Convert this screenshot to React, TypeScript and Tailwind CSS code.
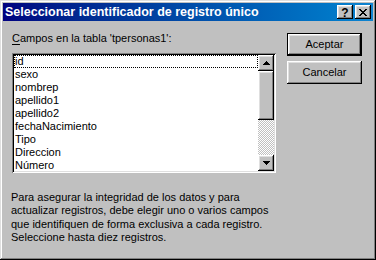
import React from 'react';

const raised =
  'shadow-[inset_-1px_-1px_#000000,inset_1px_1px_#ffffff,inset_-2px_-2px_#808080,inset_2px_2px_#dfdfdf]';

const fields = [
  'id',
  'sexo',
  'nombrep',
  'apellido1',
  'apellido2',
  'fechaNacimiento',
  'Tipo',
  'Direccion',
  'Número',
];

function Arrow({ up }: { up?: boolean }) {
  return (
    <svg width="7" height="4" viewBox="0 0 7 4" shapeRendering="crispEdges">
      {up ? (
        <path d="M3 0h1v1h1v1h1v1h1v1H0V3h1V2h1V1h1z" fill="#000" />
      ) : (
        <path d="M0 0h7v1H6v1H5v1H4v1H3V3H2V2H1V1H0z" fill="#000" />
      )}
    </svg>
  );
}

function TitleButton({ children }: { children: React.ReactNode }) {
  return (
    <div className={`w-[16px] h-[14px] bg-[#c0c0c0] flex items-center justify-center ${raised}`}>
      {children}
    </div>
  );
}

export default function App() {
  return (
    <div
      className="w-[376px] h-[260px] bg-[#c0c0c0] p-[3px] flex flex-col text-black text-[11px] shadow-[inset_-1px_-1px_#000000,inset_1px_1px_#dfdfdf,inset_-2px_-2px_#808080,inset_2px_2px_#ffffff]"
      style={{ fontFamily: '"Liberation Sans", Arial, sans-serif' }}
    >
      <div className="h-[18px] flex items-center bg-gradient-to-r from-[#000080] to-[#1084d0] pl-[2px] pr-[2px]">
        <span className="flex-1 text-white font-bold text-[12.5px] leading-[18px]">
          Seleccionar identificador de registro único
        </span>
        <div className="flex gap-[2px]">
          <TitleButton>
            <span className="font-bold text-[12px] leading-none mt-[1px]">?</span>
          </TitleButton>
          <TitleButton>
            <svg width="8" height="7" viewBox="0 0 8 7" shapeRendering="crispEdges">
              <path
                d="M0 0h2v1h1v1h2V1h1V0h2v1H7v1H6v1H5v1h1v1h1v1h1v1H6V6H5V5H3v1H2v1H0V6h1V5h1V4h1V3H2V2H1V1H0z"
                fill="#000"
              />
            </svg>
          </TitleButton>
        </div>
      </div>

      <div className="flex pl-[9px] pt-[10px]">
        <div className="w-[264px] flex flex-col">
          <div className="h-[14px] leading-[14px]">
            <span className="underline underline-offset-[2px]">C</span>ampos en la tabla 'tpersonas1':
          </div>
          <div className="mt-[8px] h-[120px] bg-white p-[2px] flex shadow-[inset_1px_1px_#808080,inset_-1px_-1px_#ffffff,inset_2px_2px_#000000,inset_-2px_-2px_#dfdfdf]">
            <div className="flex-1 overflow-hidden">
              {fields.map((f, i) => (
                <div
                  key={f}
                  className={`h-[13px] leading-[13px] pl-[1px] whitespace-nowrap ${
                    i === 0 ? 'outline outline-1 outline-dotted outline-black -outline-offset-1' : ''
                  }`}
                >
                  {f}
                </div>
              ))}
            </div>
            <div className="w-[16px] flex flex-col">
              <div className={`h-[16px] bg-[#c0c0c0] flex items-center justify-center ${raised}`}>
                <Arrow up />
              </div>
              <div className={`h-[49px] bg-[#c0c0c0] ${raised}`} />
              <div className="flex-1 bg-[image:repeating-conic-gradient(#c0c0c0_0%_25%,#ffffff_0%_50%)] bg-[length:2px_2px]" />
              <div className={`h-[16px] bg-[#c0c0c0] flex items-center justify-center ${raised}`}>
                <Arrow />
              </div>
            </div>
          </div>
        </div>

        <div className="ml-[11px] pt-[2px] flex flex-col gap-[5px]">
          <div className="w-[75px] h-[23px] border border-black">
            <div className={`h-full bg-[#c0c0c0] flex items-center justify-center ${raised}`}>
              Aceptar
            </div>
          </div>
          <div className={`w-[75px] h-[23px] bg-[#c0c0c0] flex items-center justify-center ${raised}`}>
            Cancelar
          </div>
        </div>
      </div>

      <div className="pl-[8px] mt-[18px] leading-[13.4px]">
        Para asegurar la integridad de los datos y para
        <br />
        actualizar registros, debe elegir uno o varios campos
        <br />
        que identifiquen de forma exclusiva a cada registro.
        <br />
        Seleccione hasta diez registros.
      </div>
    </div>
  );
}
